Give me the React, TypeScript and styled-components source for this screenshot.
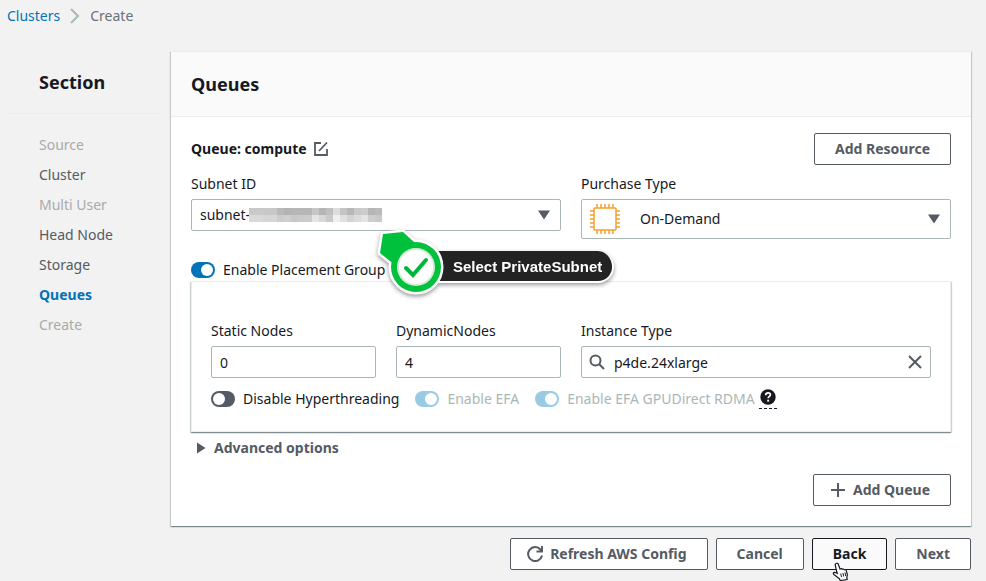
import React from "react";
import styled, { createGlobalStyle, css } from "styled-components";

const GlobalStyle = createGlobalStyle`
  *, *::before, *::after { box-sizing: border-box; }
  body {
    margin: 0;
    background: #f2f2f2;
    color: #16191f;
    font-family: "Noto Sans", "Open Sans", sans-serif;
    font-size: 14px;
    line-height: 20px;
  }
  button, input, select { font: inherit; color: inherit; }
`;

const Page = styled.div`
  padding: 6px 15px 11px 7px;
`;

const Breadcrumbs = styled.nav`
  display: flex;
  align-items: center;
  gap: 9px;
  color: #687078;
`;

const CrumbLink = styled.a`
  color: #0073bb;
  text-decoration: none;
`;

const Layout = styled.div`
  display: grid;
  grid-template-columns: 152px minmax(0, 1fr);
  gap: 12px;
  margin-top: 25px;
`;

const Sidebar = styled.aside``;

const SidebarTitle = styled.h2`
  margin: 0;
  padding: 20px 32px;
  border-bottom: 1px solid #e9ebed;
  font-size: 18px;
  line-height: 22px;
`;

const SectionList = styled.ul`
  display: flex;
  flex-direction: column;
  gap: 10px;
  margin: 0;
  padding: 21px 32px;
  list-style: none;
`;

const SectionLink = styled.a<{ $state: string }>`
  text-decoration: none;
  color: ${(p) => (p.$state === "off" ? "#aaaaaa" : p.$state === "active" ? "#0073bb" : "#545b64")};
  font-weight: ${(p) => (p.$state === "active" ? 700 : 400)};
`;

const raised = css`
  background: #ffffff;
  border: 1px solid #eaeded;
  box-shadow: 0 1px 1px 0 rgba(0, 28, 36, 0.3), 1px 1px 1px 0 rgba(0, 28, 36, 0.15),
    -1px 1px 1px 0 rgba(0, 28, 36, 0.15);
`;

const Panel = styled.section`
  ${raised}
  border-width: 1px 0 0;
`;

const PanelHeader = styled.header`
  padding: 20px;
  background: #fafafa;
  border-bottom: 1px solid #eaeded;
`;

const PanelTitle = styled.h1`
  margin: 0;
  font-size: 18px;
  line-height: 24px;
`;

const PanelBody = styled.div`
  padding: 16px 20px 20px;
`;

const Row = styled.div`
  display: flex;
  align-items: center;
  justify-content: space-between;
`;

const QueueName = styled.h3`
  display: flex;
  align-items: center;
  gap: 6px;
  margin: 0;
  font-size: 14px;
`;

const IconButton = styled.button`
  display: flex;
  padding: 0;
  border: 0;
  background: none;
  color: #545b64;
  cursor: pointer;
`;

const Button = styled.button<{ $hover?: boolean; $icon?: boolean }>`
  position: relative;
  display: flex;
  align-items: center;
  gap: 7px;
  height: 32px;
  padding: ${(p) => (p.$icon ? "0 20px 0 16px" : "0 20px")};
  border: 1px solid ${(p) => (p.$hover ? "#16191f" : "#545b64")};
  border-radius: 2px;
  background: ${(p) => (p.$hover ? "#fafafa" : "#ffffff")};
  color: ${(p) => (p.$hover ? "#16191f" : "#545b64")};
  font-weight: 700;
  white-space: nowrap;
  cursor: pointer;
`;

const TwoColumns = styled.div`
  display: grid;
  grid-template-columns: 1fr 1fr;
  align-items: start;
  gap: 20px;
  margin-top: 9px;
`;

const Field = styled.div<{ $wide?: boolean }>`
  display: flex;
  flex-direction: column;
  gap: 5px;
  min-width: 0;
  grid-column: ${(p) => (p.$wide ? "span 2" : "auto")};
`;

const Control = styled.div`
  position: relative;
  display: flex;
`;

const Select = styled.select<{ $tall?: boolean }>`
  appearance: none;
  width: 100%;
  height: ${(p) => (p.$tall ? 40 : 32)}px;
  padding: ${(p) => (p.$tall ? "0 32px 0 58px" : "0 32px 0 8px")};
  border: 1px solid #aab7b8;
  border-radius: 2px;
  background: #ffffff;
`;

const Input = styled.input<{ $search?: boolean }>`
  width: 100%;
  height: 32px;
  padding: ${(p) => (p.$search ? "1px 32px 0" : "1px 8px 0")};
  border: 1px solid #aab7b8;
  border-radius: 2px;
  background: #ffffff;
`;

const Adornment = styled.span<{ $side: "left" | "right"; $inset: number }>`
  position: absolute;
  top: 0;
  bottom: 0;
  ${(p) => p.$side}: ${(p) => p.$inset}px;
  display: flex;
  align-items: center;
  color: #545b64;
`;

const PlacementRow = styled.div`
  position: relative;
  display: flex;
  margin-top: 21px;
`;

const ToggleLabel = styled.label<{ $disabled?: boolean }>`
  display: flex;
  align-items: center;
  gap: 8px;
  white-space: nowrap;
  color: ${(p) => (p.$disabled ? "#aab7b8" : "#16191f")};
`;

const Switch = styled.input`
  appearance: none;
  display: flex;
  align-items: center;
  width: 24px;
  height: 16px;
  margin: 0;
  padding: 0 2px;
  border-radius: 8px;
  background: #545b64;
  &::before {
    content: "";
    width: 12px;
    height: 12px;
    border-radius: 50%;
    background: #ffffff;
  }
  &:checked {
    justify-content: flex-end;
    background: #0073bb;
  }
  &:disabled {
    background: #99cbe4;
  }
`;

const ResourceCard = styled.div`
  ${raised}
  margin: 1px 0 0;
  padding: 39px 19px 22px;
`;

const FourColumns = styled.div`
  display: grid;
  grid-template-columns: repeat(4, 1fr);
  gap: 20px;
`;

const Toggles = styled.div`
  display: flex;
  align-items: center;
  gap: 16px;
  margin-top: 11px;
`;

const HelpGroup = styled.div`
  display: flex;
  align-items: center;
  gap: 4px;
`;

const HelpButton = styled.button`
  display: flex;
  padding: 0 1px 3px;
  border: 0;
  border-bottom: 1px dashed #16191f;
  background: none;
`;

const Advanced = styled.button`
  display: flex;
  align-items: center;
  gap: 8px;
  margin-top: 6px;
  padding: 0 0 0 5px;
  border: 0;
  background: none;
  color: #545b64;
  font-weight: 700;
`;

const Actions = styled.div<{ $top: number }>`
  display: flex;
  justify-content: flex-end;
  gap: 8px;
  margin-top: ${(p) => p.$top}px;
`;

const Callout = styled.div`
  position: absolute;
  z-index: 2;
  left: 185px;
  top: -34px;
  display: flex;
  align-items: center;
  filter: drop-shadow(0 2px 2px rgba(0, 0, 0, 0.4));
`;

const CalloutMarker = styled.svg`
  position: relative;
  z-index: 1;
`;

const CalloutText = styled.span`
  height: 32px;
  margin: 10px 0 0 -32px;
  padding: 0 10px 0 39px;
  border: solid #ffffff;
  border-width: 0 2px 2px 0;
  border-radius: 0 16px 16px 0;
  background: #232323;
  color: #ffffff;
  font: 700 15px/32px "Liberation Sans", Arial, sans-serif;
  white-space: nowrap;
`;

const Pointer = styled.svg`
  position: absolute;
  left: 19px;
  top: 23px;
`;

const sections = [
  ["Source", "off"],
  ["Cluster", "on"],
  ["Multi User", "off"],
  ["Head Node", "on"],
  ["Storage", "on"],
  ["Queues", "active"],
  ["Create", "off"],
];

const Caret = () => (
  <svg width="12" height="10" viewBox="0 0 12 10" aria-hidden="true">
    <path d="M0 0.5h12L6 9.5z" fill="currentColor" />
  </svg>
);

const pins = [7, 11, 15, 19, 23];

const Chip = () => (
  <svg width="30" height="30" viewBox="0 0 30 30" fill="none" stroke="#f5a030" aria-hidden="true">
    <rect x="4" y="4" width="22" height="22" rx="1" strokeWidth="1.5" />
    {pins.map((p) => (
      <path key={p} d={`M${p} 0v4M${p} 26v4M0 ${p}h4M26 ${p}h4`} strokeWidth="1.5" />
    ))}
  </svg>
);

const shades = [
  ["#c9c9c9", "#c9c9c9", "#c8c8c8", "#c8c8c8", "#b9b9b9", "#b3b3b3", "#b6b6b6", "#b6b6b6", "#b6b6b6", "#c6c6c6", "#b5b5b5", "#c0c0c0", "#dddddd", "#c4c4c4", "#b7b7b7", "#c8c8c8", "#cccccc", "#b5b5b5", "#bbbbbb"],
  ["#d9d9d9", "#d9d9d9", "#d6d6d6", "#d6d6d6", "#cccccc", "#cfcfcf", "#c8c8c8", "#cbcbcb", "#cccccc", "#e4e4e4", "#d8d8d8", "#c9c9c9", "#eeeeee", "#e0e0e0", "#d4d4d4", "#dcdcdc", "#e4e4e4", "#cecece", "#c9c9c9"],
];

const Mosaic = () => (
  <svg width="133" height="14" viewBox="0 0 133 14" shapeRendering="crispEdges" aria-hidden="true">
    {shades.map((line, y) =>
      line.map((fill, x) => <rect key={`${x}-${y}`} x={x * 7} y={y * 7} width="7" height="7" fill={fill} />)
    )}
  </svg>
);

export default function App() {
  return (
    <>
      <GlobalStyle />
      <Page>
        <Breadcrumbs aria-label="Breadcrumbs">
          <CrumbLink href="#clusters">Clusters</CrumbLink>
          <svg width="12" height="16" viewBox="0 0 12 16" fill="none" stroke="#aab7b8" strokeWidth="2" aria-hidden="true">
            <path d="M2 1l7 7-7 7" />
          </svg>
          <span>Create</span>
        </Breadcrumbs>
        <Layout>
          <Sidebar>
            <SidebarTitle>Section</SidebarTitle>
            <SectionList>
              {sections.map(([name, state]) => (
                <li key={name}>
                  <SectionLink href={state === "off" ? undefined : `#${name}`} $state={state}>
                    {name}
                  </SectionLink>
                </li>
              ))}
            </SectionList>
          </Sidebar>
          <main>
            <Panel>
              <PanelHeader>
                <PanelTitle>Queues</PanelTitle>
              </PanelHeader>
              <PanelBody>
                <Row>
                  <QueueName>
                    Queue: compute
                    <IconButton aria-label="Rename queue">
                      <svg width="16" height="16" viewBox="0 0 16 16" fill="none" stroke="currentColor" strokeWidth="1.8">
                        <path d="M8 2H2v12h12V8M6 10l8-8.5" />
                      </svg>
                    </IconButton>
                  </QueueName>
                  <Button>Add Resource</Button>
                </Row>
                <TwoColumns>
                  <Field>
                    <label htmlFor="subnet">Subnet ID</label>
                    <Control>
                      <Select id="subnet">
                        <option>subnet-</option>
                      </Select>
                      <Adornment $side="left" $inset={58}>
                        <Mosaic />
                      </Adornment>
                      <Adornment $side="right" $inset={11}>
                        <Caret />
                      </Adornment>
                    </Control>
                  </Field>
                  <Field>
                    <label htmlFor="purchase">Purchase Type</label>
                    <Control>
                      <Select id="purchase" $tall>
                        <option>On-Demand</option>
                      </Select>
                      <Adornment $side="left" $inset={9}>
                        <Chip />
                      </Adornment>
                      <Adornment $side="right" $inset={11}>
                        <Caret />
                      </Adornment>
                    </Control>
                  </Field>
                </TwoColumns>
                <PlacementRow>
                  <ToggleLabel>
                    <Switch type="checkbox" defaultChecked />
                    Enable Placement Group
                  </ToggleLabel>
                  <Callout>
                    <CalloutMarker width="70" height="72" viewBox="0 0 70 72" aria-hidden="true">
                      <g stroke="#ffffff" strokeWidth="5" strokeLinejoin="round">
                        <path d="M7 8l20-2 12 11-20 22-15-12z" fill="#00c13c" />
                        <circle cx="40" cy="41" r="25" fill="#00c13c" />
                      </g>
                      <path d="M7 8l20-2 12 11-20 22-15-12z" fill="#00c13c" />
                      <circle cx="40" cy="41" r="25" fill="#00c13c" />
                      <circle cx="40" cy="41" r="19" fill="#d5ead9" />
                      <circle cx="40" cy="41" r="17" fill="#ffffff" />
                      <path d="M30 42l7 7 13-15" fill="none" stroke="#00b53a" strokeWidth="4" strokeLinecap="round" />
                    </CalloutMarker>
                    <CalloutText>Select PrivateSubnet</CalloutText>
                  </Callout>
                </PlacementRow>
                <ResourceCard>
                  <FourColumns>
                    <Field>
                      <label htmlFor="static">Static Nodes</label>
                      <Input id="static" defaultValue="0" />
                    </Field>
                    <Field>
                      <label htmlFor="dynamic">DynamicNodes</label>
                      <Input id="dynamic" defaultValue="4" />
                    </Field>
                    <Field $wide>
                      <label htmlFor="instance">Instance Type</label>
                      <Control>
                        <Input id="instance" $search defaultValue="p4de.24xlarge" />
                        <Adornment $side="left" $inset={8}>
                          <svg width="16" height="16" viewBox="0 0 16 16" fill="none" stroke="currentColor" strokeWidth="2" aria-hidden="true">
                            <circle cx="6.5" cy="6.5" r="5" />
                            <path d="M10 10l5 5" />
                          </svg>
                        </Adornment>
                        <Adornment $side="right" $inset={8}>
                          <IconButton aria-label="Clear">
                            <svg width="16" height="16" viewBox="0 0 16 16" fill="none" stroke="currentColor" strokeWidth="2">
                              <path d="M2 2l12 12M14 2L2 14" />
                            </svg>
                          </IconButton>
                        </Adornment>
                      </Control>
                    </Field>
                  </FourColumns>
                  <Toggles>
                    <ToggleLabel>
                      <Switch type="checkbox" />
                      Disable Hyperthreading
                    </ToggleLabel>
                    <ToggleLabel $disabled>
                      <Switch type="checkbox" defaultChecked disabled />
                      Enable EFA
                    </ToggleLabel>
                    <HelpGroup>
                      <ToggleLabel $disabled>
                        <Switch type="checkbox" defaultChecked disabled />
                        Enable EFA GPUDirect RDMA
                      </ToggleLabel>
                      <HelpButton aria-label="Help">
                        <svg width="16" height="16" viewBox="0 0 16 16" aria-hidden="true">
                          <circle cx="8" cy="8" r="7.7" fill="#16191f" />
                          <path d="M5.7 6.2c0-1.6 1-2.4 2.4-2.4s2.3.8 2.3 2c0 1.6-2.2 1.7-2.2 3.5" fill="none" stroke="#fff" strokeWidth="1.7" />
                          <rect x="7.2" y="10.7" width="1.9" height="1.9" fill="#fff" />
                        </svg>
                      </HelpButton>
                    </HelpGroup>
                  </Toggles>
                </ResourceCard>
                <Advanced aria-expanded="false">
                  <svg width="10" height="12" viewBox="0 0 10 12" aria-hidden="true">
                    <path d="M1 0.5v11L9.5 6z" fill="currentColor" />
                  </svg>
                  Advanced options
                </Advanced>
                <Actions $top={16}>
                  <Button $icon>
                    <svg width="16" height="16" viewBox="0 0 16 16" stroke="currentColor" strokeWidth="2" aria-hidden="true">
                      <path d="M8 1v14M1 8h14" />
                    </svg>
                    Add Queue
                  </Button>
                </Actions>
              </PanelBody>
            </Panel>
            <Actions $top={12}>
              <Button $icon>
                <svg width="16" height="16" viewBox="0 0 16 16" fill="none" stroke="currentColor" strokeWidth="2" aria-hidden="true">
                  <path d="M15 9.5A7 7 0 1 1 13.5 3.5L15 5M15 0v5.5H9.5" />
                </svg>
                Refresh AWS Config
              </Button>
              <Button>Cancel</Button>
              <Button $hover>
                Back
                <Pointer width="18" height="19" viewBox="0 0 18 19" aria-hidden="true">
                  <path
                    d="M4 1.5c1-.6 2 0 2.4 1L8 7c.8-.7 1.8-.5 2.2.3.8-.6 1.8-.3 2.1.5.9-.4 1.8 0 2 .9l1 3.6c.2 1-.2 2-.5 2.8l.4 2.4-7 1-.8-1.8C5.5 15.5 4 14 2 12.5c-1.2-1-.6-2.4.8-2.2l2.4 1.2L3.2 3.2c-.2-.7.1-1.4.8-1.7z"
                    fill="#fff"
                    stroke="#16191f"
                    strokeWidth="1.2"
                  />
                  <path d="M8.7 11.5l.8 3.5M10.9 11l.8 3.5M13 10.5l.7 3.5" stroke="#16191f" />
                </Pointer>
              </Button>
              <Button>Next</Button>
            </Actions>
          </main>
        </Layout>
      </Page>
    </>
  );
}
